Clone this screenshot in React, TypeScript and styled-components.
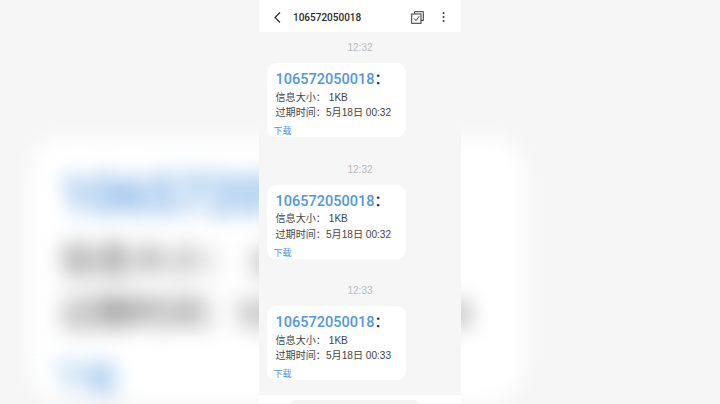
import styled, { createGlobalStyle } from 'styled-components'

const GlobalStyle = createGlobalStyle`
  html, body {
    margin: 0;
    padding: 0;
    width: 720px;
    height: 404px;
    overflow: hidden;
    background: #f6f6f6;
  }
  body, button {
    font-family: "Liberation Sans", "Noto Sans CJK SC", sans-serif;
  }
`

const Stage = styled.div`
  position: relative;
  width: 720px;
  height: 404px;
  display: flex;
  justify-content: center;
  overflow: hidden;
`

const Backdrop = styled.div`
  position: absolute;
  left: 30px;
  top: 138px;
  transform: scale(3.55);
  transform-origin: top left;
  filter: blur(3px);
`

const Phone = styled.div`
  position: relative;
  width: 202px;
  height: 404px;
  background: #f6f6f6;
  display: flex;
  flex-direction: column;
`

const Header = styled.header`
  height: 32px;
  flex-shrink: 0;
  background: #fff;
  display: flex;
  align-items: center;
  padding: 2px 16px 0 14px;
  box-sizing: border-box;
`

const Title = styled.div`
  flex: 1;
  margin-left: 11px;
  font-family: "Roboto", "Liberation Sans", sans-serif;
  font-size: 10px;
  font-weight: 500;
  color: #2a2a2a;
`

const HeaderIcons = styled.div`
  display: flex;
  align-items: center;
  gap: 18px;
`

const Thread = styled.main`
  flex: 1;
  display: flex;
  flex-direction: column;
  padding: 9px 0 0 8px;
  min-height: 0;
`

const Message = styled.section`
  display: flex;
  flex-direction: column;
  height: 121.5px;
  flex-shrink: 0;
`

const Time = styled.div`
  height: 13px;
  line-height: 13px;
  margin-bottom: 9px;
  padding-right: 8px;
  text-align: center;
  font-size: 10px;
  color: #b9b9b9;
`

const Bubble = styled.article`
  width: 139px;
  height: 74px;
  box-sizing: border-box;
  background: #fff;
  border-radius: 9px;
  padding: 8px 0 0 8.5px;
`

const Sender = styled.div`
  font-family: "Roboto", "Noto Sans CJK SC", sans-serif;
  font-size: 14.5px;
  font-weight: 500;
  line-height: 18px;
  color: #222;
  white-space: nowrap;

  span {
    color: #5196de;
  }
`

const Line = styled.div`
  margin-top: 0.5px;
  font-size: 10.1px;
  line-height: 15px;
  color: #444;
  white-space: nowrap;
`

const Download = styled.div`
  margin: 5px 0 0 -2px;
  font-size: 9px;
  line-height: 12px;
  color: #5196de;
`

const Footer = styled.footer`
  height: 4px;
  flex-shrink: 0;
  background: #fff;
  display: flex;
  justify-content: center;
  padding-top: 5px;
  overflow: hidden;
`

const InputBox = styled.div`
  width: 130px;
  height: 20px;
  margin-right: 11px;
  background: #f4f4f4;
  border-radius: 6px;
`

const messages = [
  { time: '12:32', expires: '00:32' },
  { time: '12:32', expires: '00:32' },
  { time: '12:33', expires: '00:33' },
]

function MessageCard({ expires }: { expires: string }) {
  return (
    <Bubble>
      <Sender>
        <span>106572050018</span>：
      </Sender>
      <Line>信息大小：&nbsp;1KB</Line>
      <Line>过期时间：5月18日 {expires}</Line>
      <Download>下载</Download>
    </Bubble>
  )
}

export default function App() {
  return (
    <>
      <GlobalStyle />
      <Stage>
        <Backdrop>
          <MessageCard expires="00:33" />
        </Backdrop>
        <Phone>
          <Header>
            <svg width="9" height="13" viewBox="0 0 9 13" fill="none" stroke="#2a2a2a" strokeWidth="1.2">
              <path d="M7 1.5 L2 6.5 L7 11.5" />
            </svg>
            <Title>106572050018</Title>
            <HeaderIcons>
              <svg width="13" height="13" viewBox="0 0 13 13" fill="none" stroke="#333" strokeWidth="1">
                <path d="M3.5 2.8 V0.7 H12.3 V9.5 H10" />
                <rect x="0.7" y="3" width="9.3" height="9.3" />
                <path d="M3 7.5 L5 9.5 L8.3 5.2" />
              </svg>
              <svg width="3" height="12" viewBox="0 0 3 12" fill="#333">
                <circle cx="1.5" cy="2" r="1" />
                <circle cx="1.5" cy="6" r="1" />
                <circle cx="1.5" cy="10" r="1" />
              </svg>
            </HeaderIcons>
          </Header>
          <Thread>
            {messages.map((m, i) => (
              <Message key={i}>
                <Time>{m.time}</Time>
                <MessageCard expires={m.expires} />
              </Message>
            ))}
          </Thread>
          <Footer>
            <InputBox />
          </Footer>
        </Phone>
      </Stage>
    </>
  )
}
